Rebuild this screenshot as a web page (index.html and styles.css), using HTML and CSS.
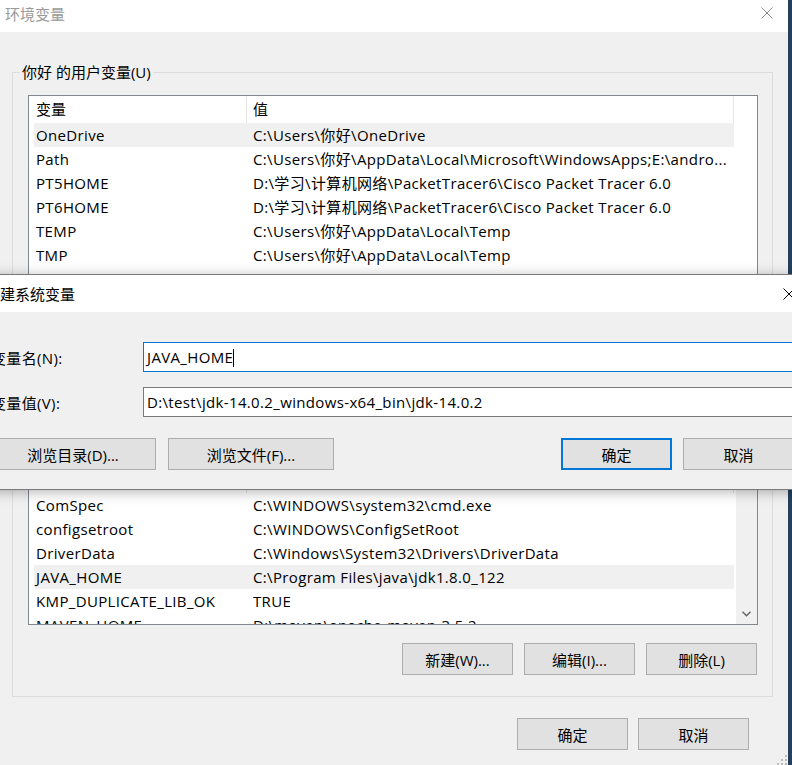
FILE: index.html
```html
<!DOCTYPE html>
<html lang="zh-CN">
<head>
<meta charset="utf-8">
<title>环境变量</title>
<link rel="stylesheet" href="styles.css">
</head>
<body>
<div class="window">
  <div class="titlebar">
    <span class="title">环境变量</span>
    <svg class="x-main" width="12" height="12" viewBox="0 0 12 12"><path d="M0.5 0.5L11.5 11.5M11.5 0.5L0.5 11.5" stroke="#8a8a8a" stroke-width="1" fill="none"/></svg>
  </div>
  <div class="content">
    <fieldset class="group">
      <legend>你好 的用户变量(U)</legend>
      <div class="list user-list">
        <div class="list-inner">
          <div class="lhead"><span class="h1">变量</span><span class="h2">值</span></div>
          <div class="row sel"><span class="c1">OneDrive</span><span class="c2">C:\Users\你好\OneDrive</span></div>
          <div class="row"><span class="c1">Path</span><span class="c2">C:\Users\你好\AppData\Local\Microsoft\WindowsApps;E:\andro...</span></div>
          <div class="row"><span class="c1">PT5HOME</span><span class="c2">D:\学习\计算机网络\PacketTracer6\Cisco Packet Tracer 6.0</span></div>
          <div class="row"><span class="c1">PT6HOME</span><span class="c2">D:\学习\计算机网络\PacketTracer6\Cisco Packet Tracer 6.0</span></div>
          <div class="row"><span class="c1">TEMP</span><span class="c2">C:\Users\你好\AppData\Local\Temp</span></div>
          <div class="row"><span class="c1">TMP</span><span class="c2">C:\Users\你好\AppData\Local\Temp</span></div>
        </div>
      </div>
      <div class="btnrow">
        <button class="btn">新建(N)...</button>
        <button class="btn">编辑(E)...</button>
        <button class="btn">删除(D)</button>
      </div>
    </fieldset>
    <fieldset class="group">
      <legend>系统变量(S)</legend>
      <div class="list sys-list">
        <div class="list-inner">
          <div class="lhead"><span class="h1">变量</span><span class="h2">值</span></div>
          <div class="row"><span class="c1">ComSpec</span><span class="c2">C:\WINDOWS\system32\cmd.exe</span></div>
          <div class="row"><span class="c1">configsetroot</span><span class="c2">C:\WINDOWS\ConfigSetRoot</span></div>
          <div class="row"><span class="c1">DriverData</span><span class="c2">C:\Windows\System32\Drivers\DriverData</span></div>
          <div class="row sel"><span class="c1">JAVA_HOME</span><span class="c2">C:\Program Files\java\jdk1.8.0_122</span></div>
          <div class="row"><span class="c1">KMP_DUPLICATE_LIB_OK</span><span class="c2">TRUE</span></div>
          <div class="row"><span class="c1">MAVEN_HOME</span><span class="c2">D:\maven\apache-maven-3.5.2</span></div>
        </div>
        <div class="vscroll">
          <div class="sbtn"><svg width="9" height="6" viewBox="0 0 9 6"><path d="M0.5 0.8L4.5 4.8L8.5 0.8" stroke="#606060" stroke-width="1.3" fill="none"/></svg></div>
        </div>
      </div>
      <div class="btnrow">
        <button class="btn">新建(W)...</button>
        <button class="btn">编辑(I)...</button>
        <button class="btn">删除(L)</button>
      </div>
    </fieldset>
    <div class="footer">
      <button class="btn">确定</button>
      <button class="btn">取消</button>
    </div>
  </div>
  <svg class="grip" width="10" height="10" viewBox="0 0 10 10"><g fill="#bcbcbc"><rect x="8" y="0" width="2" height="2"/><rect x="4" y="4" width="2" height="2"/><rect x="8" y="4" width="2" height="2"/><rect x="0" y="8" width="2" height="2"/><rect x="4" y="8" width="2" height="2"/><rect x="8" y="8" width="2" height="2"/></g></svg>
</div>
<div class="edge"></div>

<div class="dialog">
  <div class="dlg-title">
    <span>新建系统变量</span>
    <svg width="12" height="12" viewBox="0 0 12 12"><path d="M0.5 0.5L11.5 11.5M11.5 0.5L0.5 11.5" stroke="#000" stroke-width="1" fill="none"/></svg>
  </div>
  <div class="dlg-body">
    <div class="field">
      <span class="lbl">变量名(N):</span>
      <div class="input focus">JAVA_HOME<span class="caret"></span></div>
    </div>
    <div class="field">
      <span class="lbl">变量值(V):</span>
      <div class="input">D:\test\jdk-14.0.2_windows-x64_bin\jdk-14.0.2</div>
    </div>
    <div class="dlg-btns">
      <button class="btn wide">浏览目录(D)...</button>
      <button class="btn wide">浏览文件(F)...</button>
      <span class="spacer"></span>
      <button class="btn default">确定</button>
      <button class="btn">取消</button>
    </div>
  </div>
</div>
</body>
</html>
```
FILE: styles.css
```css
* { box-sizing: border-box; }
html, body { margin: 0; padding: 0; }
body {
  width: 792px;
  height: 765px;
  overflow: hidden;
  position: relative;
  display: flex;
  background: #f0f0f0;
  font-family: "Open Sans", "Noto Sans CJK SC", sans-serif;
  font-size: 15px;
  color: #000;
}
.window {
  width: 788px;
  height: 765px;
  background: #f0f0f0;
  display: flex;
  flex-direction: column;
  position: relative;
  flex: none;
}
.edge { width: 4px; background: #24405e; flex: none; }

.titlebar {
  height: 32px;
  background: #fff;
  display: flex;
  align-items: flex-start;
  justify-content: space-between;
  padding: 0 15px 0 5px;
  flex: none;
}
.titlebar .title { color: #9a9a9a; line-height: 20px; margin-top: 4px; }
.x-main { margin-top: 7px; }

.content {
  padding: 0 15px 0 12px;
  display: flex;
  flex-direction: column;
}
fieldset.group {
  margin: 30px 0 0 0;
  border: 1px solid #dcdcdc;
  padding: 13px 14px 21px 15px;
  min-width: 0;
}
fieldset.group legend {
  padding: 0 2px;
  margin-left: -8px;
  line-height: 20px;
}

.list {
  border: 1px solid #828790;
  background: #fff;
  overflow: hidden;
  display: flex;
}
.user-list { height: 235px; }
.sys-list { height: 160px; }
.list-inner { width: 706px; flex: none; }
.lhead { display: flex; height: 27px; line-height: 27px; width: 705px; }
.lhead .h1 { width: 218px; padding-left: 7px; border-right: 1px solid #e5e5e5; }
.lhead .h2 { width: 487px; padding-left: 6px; border-right: 1px solid #e5e5e5; }
.row { display: flex; height: 24px; line-height: 24px; width: 700px; margin-left: 5px; white-space: nowrap; letter-spacing: 0.35px; }
.row.sel { background: #f0f0f0; }
.row .c1 { width: 219px; padding-left: 2px; flex: none; overflow: hidden; }
.row .c2 { width: 481px; flex: none; overflow: hidden; }

.vscroll {
  width: 21px;
  margin-left: auto;
  background: #f0f0f0;
  display: flex;
  flex-direction: column;
  justify-content: flex-end;
}
.sbtn { height: 21px; display: flex; align-items: center; justify-content: center; }

.btnrow { display: flex; justify-content: flex-end; gap: 11px; margin-top: 18px; padding-right: 1px; }
.btn {
  width: 111px;
  height: 32px;
  background: #e1e1e1;
  border: 1px solid #adadad;
  font: inherit;
  color: #000;
  padding: 0;
  margin: 0;
  display: flex;
  align-items: center;
  justify-content: center;
  flex: none;
}
.footer { display: flex; justify-content: flex-end; gap: 10px; margin-top: 21px; padding-right: 24px; }
.grip { position: absolute; right: 1px; bottom: 0; }

.dialog {
  position: absolute;
  top: 274px;
  left: -22px;
  width: 832px;
  background: #f0f0f0;
  border: 1px solid #7a7a7a;
  box-shadow: 0 2px 12px rgba(0, 0, 0, 0.3);
}
.dlg-title {
  height: 37px;
  background: #fff;
  display: flex;
  align-items: center;
  justify-content: space-between;
  padding: 0 14px 0 6px;
}
.dlg-body { padding: 30px 15px 19px 11px; }
.field { display: flex; align-items: center; height: 30px; }
.field + .field { margin-top: 15px; }
.lbl { width: 153px; flex: none; padding-left: 1px; letter-spacing: 0.35px; }
.input {
  flex: 1;
  height: 30px;
  background: #fff;
  border: 1px solid #7a7a7a;
  padding-left: 3px;
  line-height: 28px;
  white-space: nowrap;
  overflow: hidden;
  letter-spacing: 0.35px;
}
.input.focus { border-color: #0078d7; }
.caret { display: inline-block; width: 1px; height: 18px; background: #000; vertical-align: middle; margin-top: -2px; }
.dlg-btns { display: flex; margin-top: 21px; gap: 11px; }
.dlg-btns .wide { width: 166px; }
.dlg-btns .wide + .wide { margin-left: 1px; }
.spacer { flex: 1; }
.btn.default { border: 2px solid #0078d7; }
```
